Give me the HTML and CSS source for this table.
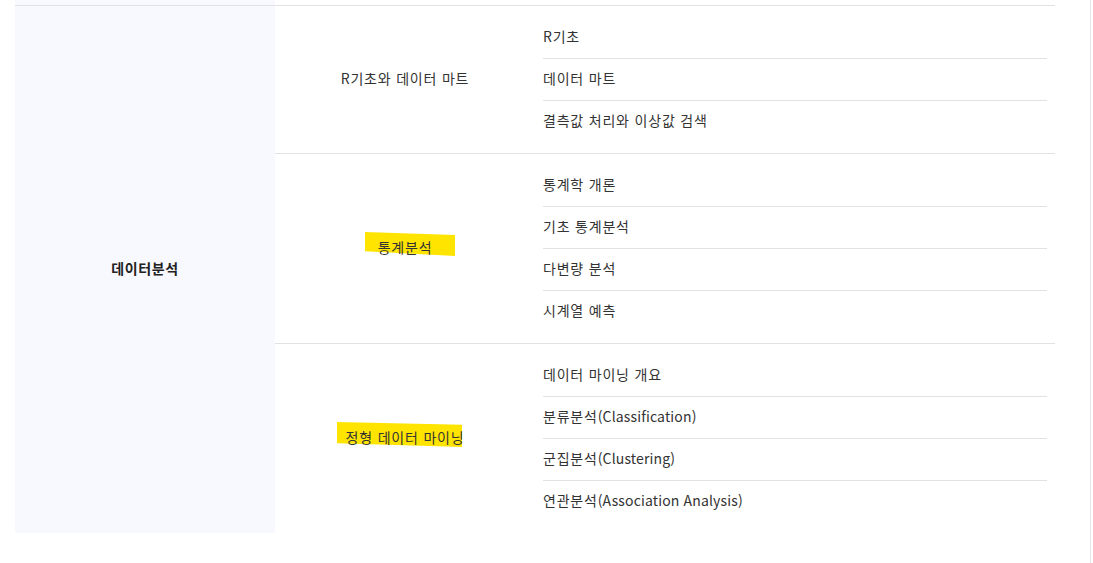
FILE: index.html
```html
<!DOCTYPE html>
<html lang="ko">
<head>
<meta charset="utf-8">
<link rel="stylesheet" href="styles.css">
</head>
<body>
<div class="page">
  <div class="prev-row">
    <div class="prev-left"></div>
  </div>
  <div class="subject">
    <div class="subject-name">데이터분석</div>
    <div class="groups">
      <div class="group">
        <div class="group-name"><span>R기초와 데이터 마트</span></div>
        <ul class="items">
          <li>R기초</li>
          <li>데이터 마트</li>
          <li>결측값 처리와 이상값 검색</li>
        </ul>
      </div>
      <div class="group">
        <div class="group-name"><span class="hl hl-a">통계분석</span></div>
        <ul class="items">
          <li>통계학 개론</li>
          <li>기초 통계분석</li>
          <li>다변량 분석</li>
          <li>시계열 예측</li>
        </ul>
      </div>
      <div class="group">
        <div class="group-name"><span class="hl hl-b">정형 데이터 마이닝</span></div>
        <ul class="items">
          <li>데이터 마이닝 개요</li>
          <li>분류분석<span class="en">(Classification)</span></li>
          <li>군집분석<span class="en">(Clustering)</span></li>
          <li>연관분석<span class="en">(Association Analysis)</span></li>
        </ul>
      </div>
    </div>
  </div>
</div>
</body>
</html>
```
FILE: styles.css
```css
html, body {
  margin: 0;
  padding: 0;
  background: #fff;
}
body {
  font-family: "Noto Sans CJK KR", "Noto Sans", sans-serif;
  font-size: 14px;
  color: #333;
  letter-spacing: 0.8px;
}
.en {
  letter-spacing: 0.15px;
}
.page {
  width: 1091px;
  height: 563px;
  box-sizing: border-box;
  border-right: 1px solid #e4e4ec;
  padding-left: 15px;
  overflow: hidden;
}
.prev-row {
  width: 1040px;
  height: 6px;
  box-sizing: border-box;
  border-bottom: 1px solid #e2e2e6;
}
.prev-left {
  width: 260px;
  height: 5px;
  background: #f8f9fe;
}
.subject {
  display: grid;
  grid-template-columns: 260px 780px;
}
.subject-name {
  background: #f8f9fe;
  display: flex;
  align-items: center;
  justify-content: center;
  font-weight: 700;
  color: #222;
  padding-bottom: 4px;
  letter-spacing: 0.6px;
}
.group {
  display: grid;
  grid-template-columns: 260px 1fr;
}
.group + .group {
  border-top: 1px solid #e2e2e6;
}
.group-name {
  display: flex;
  align-items: center;
  justify-content: center;
  line-height: 20px;
  padding-bottom: 3px;
}
.items {
  list-style: none;
  margin: 0;
  padding: 10px 8px 11px 8px;
}
.items li {
  height: 42px;
  box-sizing: border-box;
  display: flex;
  align-items: center;
  line-height: 20px;
  padding-bottom: 3px;
}
.items li + li {
  border-top: 1px solid #e2e2e6;
}
.hl {
  position: relative;
  z-index: 0;
}
.hl::before {
  content: "";
  position: absolute;
  z-index: -1;
  background: #ffe400;
}
.hl-a::before {
  left: -13px;
  right: -23px;
  top: -5px;
  bottom: 1px;
  clip-path: polygon(0 0, 100% 12%, 100% 100%, 0 80%);
}
.hl-b::before {
  left: -9px;
  right: 2px;
  top: -5px;
  bottom: 0;
  clip-path: polygon(0 0, 100% 11%, 100% 100%, 0 85%);
}
```
